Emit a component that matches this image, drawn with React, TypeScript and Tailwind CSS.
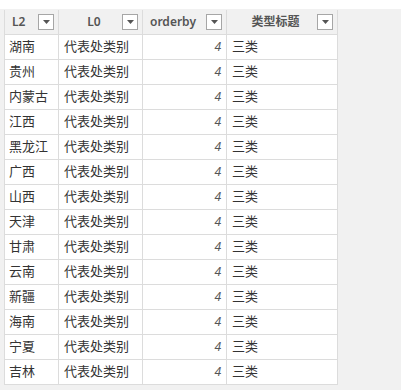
import React from 'react'

const provinces = ['湖南', '贵州', '内蒙古', '江西', '黑龙江', '广西', '山西', '天津', '甘肃', '云南', '新疆', '海南', '宁夏', '吉林']

const font = { fontFamily: '"Noto Sans", "Noto Sans CJK SC", sans-serif' }

function Caret() {
  return (
    <div className="w-[16px] h-[16px] border border-[#a6a6a6] bg-white flex items-center justify-center shrink-0">
      <svg width="7" height="4" viewBox="0 0 7 4">
        <path d="M0 0h7L3.5 4z" fill="#555" />
      </svg>
    </div>
  )
}

function HeadCell({ label, width, center }: { label: string; width: string; center?: boolean }) {
  return (
    <div className={`${width} h-full flex items-center pl-[7px] pr-[4px] border-r border-[#dcdcdc]`}>
      <span className={`flex-1 text-[12px] font-semibold text-[#555] ${center ? 'text-center' : ''}`}>{label}</span>
      <Caret />
    </div>
  )
}

export default function App() {
  return (
    <div className="w-[401px] h-[390px] overflow-hidden bg-white" style={font}>
      <div className="mt-[9px] h-[381px] bg-[#f1f1f1] pl-[4px] pt-[1px]">
        <div className="w-[334px] border-l border-[#dcdcdc]">
          <div className="h-[25px] flex border-b border-[#dcdcdc]">
            <HeadCell label="L2" width="w-[54px]" />
            <HeadCell label="L0" width="w-[84px]" center />
            <HeadCell label="orderby" width="w-[84px]" />
            <HeadCell label="类型标题" width="w-[111px]" center />
          </div>
          {provinces.map((p) => (
            <div key={p} className="h-[25px] flex bg-white border-b border-[#dcdcdc] text-[13px] text-[#333]">
              <div className="w-[54px] flex items-center pl-[4px] border-r border-[#dcdcdc]">{p}</div>
              <div className="w-[84px] flex items-center pl-[5px] border-r border-[#dcdcdc]">代表处类别</div>
              <div className="w-[84px] flex items-center justify-end pr-[5px] border-r border-[#dcdcdc] italic text-[#555] text-[12px]">4</div>
              <div className="w-[111px] flex items-center pl-[5px] border-r border-[#dcdcdc]">三类</div>
            </div>
          ))}
        </div>
      </div>
    </div>
  )
}
